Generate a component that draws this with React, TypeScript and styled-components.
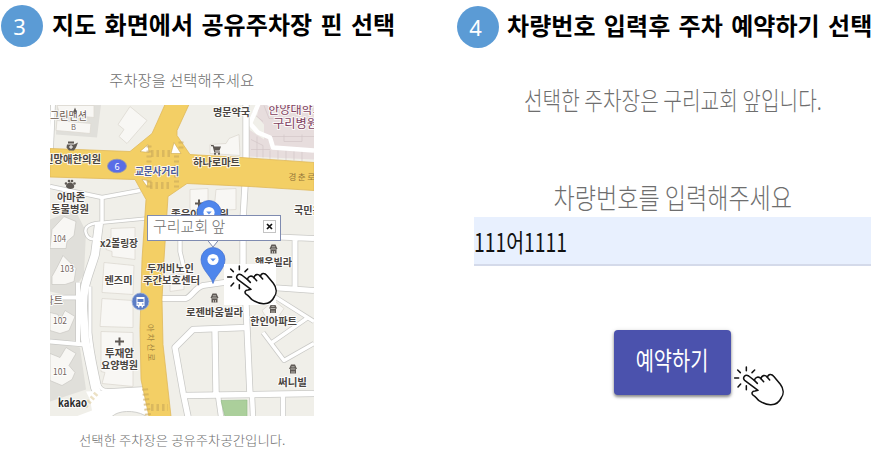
import React from 'react';
import styled, { createGlobalStyle } from 'styled-components';

const Global = createGlobalStyle`
  * { box-sizing: border-box; }
  body { margin: 0; background: #fff; overflow: hidden; }
`;

const Page = styled.main`
  display: grid;
  grid-template-columns: 457px 420px;
  width: 877px;
  height: 452px;
  background: #fff;
  font-family: "Noto Sans CJK KR", sans-serif;
`;

const Step = styled.section`
  display: flex;
  flex-direction: column;
  min-width: 0;
`;

const StepHeader = styled.header<{ $top: number; $left: number }>`
  display: flex;
  height: 50px;
  padding: ${p => p.$top}px 0 0 ${p => p.$left}px;
`;

const Badge = styled.span`
  flex: none;
  width: 42px;
  height: 42px;
  border-radius: 50%;
  background: #5b9bd5;
  color: #fff;
  font: 400 22px/43px "Noto Sans", sans-serif;
  text-align: center;
  padding-right: 5px;
`;

const Title = styled.h2<{ $gap: number }>`
  margin: 0 0 0 ${p => p.$gap}px;
  font-size: 24px;
  line-height: 38px;
  font-weight: 700;
  letter-spacing: 0.06px;
  word-spacing: 2.8px;
  white-space: nowrap;
  color: #000;
`;

const Body = styled.div<{ $left: number; $width: number }>`
  display: flex;
  flex-direction: column;
  align-items: center;
  margin-left: ${p => p.$left}px;
  width: ${p => p.$width}px;
`;

const Caption = styled.p<{ $size: number; $height: number; $squeeze?: number; $top?: number }>`
  margin: ${p => p.$top ?? 0}px 0 0;
  height: ${p => p.$height}px;
  font-size: ${p => p.$size}px;
  line-height: ${p => p.$height}px;
  font-weight: 300;
  white-space: nowrap;
  color: #6e6e6e;
  transform: scaleX(${p => p.$squeeze ?? 1});
`;

const MapFrame = styled.div`
  position: relative;
  width: 264px;
  height: 311px;
  overflow: hidden;
  margin-top: 14px;
`;

const MapDrawing = styled.svg`
  display: block;
  width: 264px;
  height: 311px;
`;

const Label = styled.text<{ $thin?: boolean }>`
  font-family: "Noto Sans CJK KR", sans-serif;
  font-weight: ${p => (p.$thin ? 400 : 700)};
  paint-order: stroke;
  stroke: rgba(255, 255, 255, 0.85);
  stroke-width: 2px;
  stroke-linejoin: round;
`;

const InfoWindow = styled.div`
  position: absolute;
  left: 97px;
  top: 110px;
  width: 134px;
  height: 26px;
  display: flex;
  align-items: center;
  justify-content: space-between;
  padding: 0 4px 4px 5px;
  border: 1px solid #7f8bb0;
  background: #fff;
  color: #6e6e6e;
  font-size: 15px;
  font-weight: 300;
  line-height: 20px;
  white-space: nowrap;
`;

const CloseButton = styled.button`
  width: 13px;
  height: 13px;
  padding: 0;
  border: 1px solid #c4c4c4;
  background: #fff;
  display: grid;
  place-items: center;
`;

const MapHand = styled.div`
  position: absolute;
  left: 174px;
  top: 159px;
  width: 52px;
  height: 41px;
  background: #fff;
`;

const Field = styled.div`
  width: 397px;
  height: 49px;
  background: #e8f0fe;
  border-bottom: 2px solid #d4daea;
  display: flex;
  align-items: center;
`;

const FieldValue = styled.span`
  font-size: 25.5px;
  line-height: 48px;
  font-weight: 400;
  color: #111;
  white-space: nowrap;
  transform: scaleX(0.76);
  transform-origin: left center;
`;

const ActionRow = styled.div`
  position: relative;
  margin-top: 64px;
`;

const ReserveButton = styled.button`
  display: block;
  width: 117px;
  height: 65px;
  padding: 0 0 8px;
  border: 0;
  border-radius: 4px;
  background: #4b52ad;
  color: #fff;
  font: 400 25px/56px "Noto Sans CJK KR", sans-serif;
  box-shadow: 0 2px 3px rgba(0, 0, 0, 0.4), 0 1px 5px rgba(0, 0, 0, 0.16);
`;

const ButtonText = styled.span`
  display: inline-block;
  transform: scaleX(0.79);
  margin: 0 -20px;
`;

const ButtonHand = styled.div`
  position: absolute;
  left: 117px;
  top: 35px;
  width: 53px;
  height: 41px;
`;

const HandDrawing = styled.svg`
  display: block;
  width: 53px;
  height: 41px;
`;

function Hand() {
  return (
    <HandDrawing viewBox="0 0 159 123" fill="none" stroke="#111" strokeWidth="4.6" strokeLinecap="round" strokeLinejoin="round">
      <path d="M46 6V17M11 39H23M20 15L28 23M71 15L63 23M29 57L21 66M46 62V74" />
      <path fill="#fff" d="M81 76L41 46C33 38 43 26 53 33L70 46C73 36 83 33 90 41C92 30 103 29 109 37C112 26 122 26 128 34L148 58C158 71 159 87 151 98C145 112 135 119 120 119C105 120 94 113 84 107C77 102 74 94 67 91C60 86 63 78 72 78Z" />
      <path d="M70 46L79 55M90 41L98 50M109 37L116 45" />
    </HandDrawing>
  );
}

type Place = { t: string; x: number; y: number; w: number; s?: number; c?: string; thin?: boolean };

const places: Place[] = [
  { t: '그린맨션', x: 50, y: 120.5, w: 37, s: 11, c: '#6a5a50', thin: true },
  { t: 'B', x: 71, y: 130, w: 5, s: 8, c: '#75675f', thin: true },
  { t: '신망애한의원', x: 44, y: 163.5, w: 57 },
  { t: '교문사거리', x: 135, y: 175, w: 44, s: 10, c: '#4a5a9c' },
  { t: '아마존', x: 57, y: 201, w: 28 },
  { t: '동물병원', x: 51, y: 213, w: 38 },
  { t: '명문약국', x: 213, y: 116, w: 37 },
  { t: '한양대학교', x: 268, y: 114, w: 56, s: 12, c: '#81415f', thin: true },
  { t: '구리병원', x: 273, y: 128, w: 45, s: 12, c: '#81415f', thin: true },
  { t: '하나로마트', x: 193, y: 166, w: 47 },
  { t: '좋은아이의원', x: 171, y: 218.5, w: 58 },
  { t: '국민은행', x: 294, y: 214, w: 37 },
  { t: 'x2볼링장', x: 100, y: 247, w: 38 },
  { t: '두꺼비노인', x: 147, y: 272, w: 47 },
  { t: '주간보호센터', x: 143, y: 284, w: 57 },
  { t: '렌즈미', x: 104.5, y: 284, w: 28 },
  { t: '행운빌라', x: 255, y: 266, w: 37 },
  { t: '로젠바움빌라', x: 186, y: 316, w: 57 },
  { t: '한인아파트', x: 250, y: 325.5, w: 47 },
  { t: '투재암', x: 105, y: 357.5, w: 29 },
  { t: '요양병원', x: 101, y: 369, w: 37 },
  { t: '써니빌', x: 278, y: 386, w: 29 },
  { t: '104', x: 53, y: 242, w: 13, s: 8.5, c: '#75675f', thin: true },
  { t: '103', x: 60, y: 272, w: 14, s: 8.5, c: '#75675f', thin: true },
  { t: '102', x: 53, y: 324, w: 14, s: 8.5, c: '#75675f', thin: true },
  { t: '101', x: 53, y: 375, w: 14, s: 8.5, c: '#75675f', thin: true },
  { t: '아파트', x: 35, y: 304, w: 28, c: '#75675f', thin: true },
];

const buildings = [
  'M57 106H94V118L60 115ZM57 121L91 124L90 134L56 131Z',
  'M130 107L147 121L127 144L119 137L124 130L118 125Z',
  'M210 145L226 144L229 139L239 135L240 156L210 154Z',
  'M111 229L135 228V260L112 257V252L106 250V240L111 238Z',
  'M104 263L134 266L133 295L102 293Z',
  'M102 299L133 301V328L100 327Z',
  'M101 332L133 333V387L102 384L105 373L101 372Z',
  'M190 190L208 189V210H190ZM216 190L236 189V210L214 211Z',
  'M262 311L274 301L284 309L277 319L265 316Z',
  'M170 275H184V290L170 292Z',
];

const flats = [
  'M52 230L64 217L76 222L74 236L67 242L66 249L50 249Z',
  'M57 268L63 256L70 263L76 269L74 282L65 285L52 285V277Z',
  'M50 313L58 315L60 321L65 311L75 317L69 331L60 334L50 331Z',
  'M50 354L60 358L66 348L76 354L69 366L75 373L72 380L62 386L50 381Z',
];

const roads: [string, number][] = [
  ['M53 105L51 150', 4],
  ['M50 187L102 198L140 191M102 197V224', 3.5],
  ['M146 219L104 223C91 223 83 227 86 234C88 240 92 240 96 239', 2.5],
  ['M99 224L95 255C89 275 83 285 83 307L85 340L95 388L107 416', 8],
  ['M90 287V333C92 355 96 370 99 385Q101 392 110 391L145 389', 3],
  ['M50 298H79M78 283V344M50 342L84 345', 4],
  ['M246 105V160M245 186L243 220V284L246 305L250 396', 5.5],
  ['M162 299H186C192 297 195 288 203 286L224 283H244M244 236L314 239M295 239V288M244 286L314 291', 5],
  ['M180 240V252L185 273', 3.5],
  ['M246 328L193 330L175 348L183 393L188 417', 5.5],
  ['M215 330L216 394M184 396L314 394', 5.5],
  ['M218 396L221 417M252 395L253 417M283 395V417', 4.5],
  ['M263 333L284 361L314 344M272 343L308 318M246 287L276 298L314 322', 3.5],
];

function Pin({ x, y }: { x: number; y: number }) {
  return (
    <g transform={`translate(${x} ${y})`}>
      <path d="M0 24C-2 16-12 10-12 0A12 12 0 0 1 12 0C12 10 2 16 0 24Z" fill="#4f86ec" stroke="#426fce" strokeWidth=".7" />
      <circle r="5.6" fill="#fff" />
      <path d="M-2.8-1H2.8L0 2Z" fill="#5c91ec" />
    </g>
  );
}

function TinyHouse({ x, y }: { x: number; y: number }) {
  return (
    <g transform={`translate(${x} ${y})`}>
      <path d="M-3 4.5V0H-4L-2-4.5H2L4 0H3V4.5Z" fill="#5e5954" />
      <path d="M-1 4.5V2M1 4.5V2M-2.4 0H2.4M-1.6-2.2H1.6" stroke="#e4e2dd" strokeWidth=".7" />
    </g>
  );
}

function StreetMap() {
  return (
    <MapDrawing viewBox="50 105.5 264 311" fill="none">
      <path fill="#f0efe9" d="M50 105H314V417H50Z" />
      <path fill="#e0dfda" d="M57 105H101L97 138L56 135ZM50 220L75 210L86 232L84 275L78 284L76 298L50 292ZM50 300H80V341H50ZM50 343L80 348L86 390L50 402Z" />
      <path fill="#e7dddd" d="M259 105H314V160L249 157V130L264 140V125L257 117Z" />
      <path stroke="#d2c5c7" strokeWidth=".7" d="M251 140L263 146V158M257 137V158M251 150H270M270 151V160M278 151V160M286 151V161M294 151V161M302 151V162M270 137H314M284 135V142H302V135M264 106L269 119H314M252 113L263 122" />
      <path stroke="#fff" strokeWidth="4.5" strokeLinejoin="round" d="M259 103L250 124L258 133L270 138L273 148L314 151" />
      {buildings.map(d => <path key={d} d={d} fill="#f8f7f4" stroke="#ddd9d2" strokeWidth=".8" />)}
      {flats.map(d => <path key={d} d={d} fill="#f8f7f4" stroke="#c5c3bd" strokeWidth=".6" />)}
      {roads.map(([d, w]) => <path key={`edge${d}`} d={d} stroke="#c9c9c6" strokeWidth={w + 1.5} strokeLinejoin="round" />)}
      {roads.map(([d, w]) => <path key={d} d={d} stroke="#fff" strokeWidth={w} strokeLinejoin="round" />)}
      <path fill="#fff" d="M86 392L147 389L151 417H76L92 411L90 400Z" />
      <path fill="#f0efe9" stroke="#d0d0cd" d="M112 417C118 411 134 410 145 416V417Z" />
      <path fill="#abcf9b" stroke="#91bc87" strokeWidth=".6" d="M221 401L247 400.5V417H225Z" />
      <path fill="#f3cf65" stroke="#dfb95a" strokeWidth=".8" d="M50 149L130 152L152 134L157 123L165 105H189L177 131V136L190 155L241 158L314 163V191L250 187L187 184L168 197L164 260L162 300L163 345L171 417H149L141 380L140 330L142 260L146 200L135 180L50 177.500Z" />
      <path fill="#fff" stroke="#cda94f" strokeWidth=".6" d="M140 152L148 145L149 153ZM174 143L181 154H171ZM142 180L147 187L148 181Z" />
      <g stroke="#c9a95a" strokeOpacity=".6">
        <path strokeWidth="7" strokeDasharray="2.5 3" d="M151 154H172M150 186H172M151 408H168" />
        <path strokeWidth="5" strokeDasharray="2 3" d="M149 146V190M176.500 156V190M181 142V152" />
        <path strokeWidth="6" strokeDasharray="2 3" d="M145 389L148 416" />
        <path strokeWidth="5" strokeDasharray="2.500 2.500" strokeOpacity=".35" d="M85 407L98 392" />
      </g>
      <ellipse cx="117" cy="166.5" rx="9.5" ry="6.8" fill="#596de7" stroke="#8d94b1" strokeWidth=".8" />
      <text x="117" y="170" fill="#fff" fontFamily="Noto Sans" fontSize="9" textAnchor="middle">6</text>
      <text x="288.500" y="180" fill="#96783a" fontFamily="Noto Sans CJK KR" fontSize="8.500" letterSpacing="1.500">경춘로</text>
      <text transform="translate(147 324.500) rotate(88)" fill="#a5863f" fontFamily="Noto Sans CJK KR" fontSize="8.500" letterSpacing="2">아차산로</text>
      {places.map(p => (
        <Label key={p.t} x={p.x} y={p.y} textLength={p.w} lengthAdjust="spacingAndGlyphs" fontSize={p.s ?? 10.5} fill={p.c ?? '#4a4541'} $thin={p.thin}>{p.t}</Label>
      ))}
      <Label x="58" y="407.500" fontSize="11" textLength="29" lengthAdjust="spacingAndGlyphs" fill="#2c2c2c">kakao</Label>
      <TinyHouse x={273.5} y={249.5} />
      <TinyHouse x={214.5} y={298.500} />
      <TinyHouse x={273} y={309} />
      <TinyHouse x={293} y={369.500} />
      <g fill="#5e5954">
        <path d="M118.500 338H120.500V341H124V343H120.500V346H118.500V343H115V341H118.500ZM198 200H200V203H203V205H200V208H198V205H195V203H198Z" />
        <path d="M67 145H74L78 143L76 148L74 151H69L66.500 148ZM68 144V142H74V144Z" />
        <path d="M66 187C66 184 69 183 70 183C72 183 75 185 74 188C73 190 67 190 66 187Z" />
        <circle cx="66" cy="184" r="1.3" /><circle cx="69" cy="181.5" r="1.3" /><circle cx="72" cy="181.5" r="1.3" /><circle cx="74.5" cy="184" r="1.3" />
        <path d="M211 145.500H213.500L214.300 147H221L219.500 151H215L215.300 152H220V153H214.300L212.700 146.700H211Z" />
        <circle cx="215" cy="154.300" r="1.1" /><circle cx="219" cy="154.300" r="1.100" />
        <path d="M73 113L75 108L77 113Z" />
      </g>
      <path d="M71 145.500V149.500M69 147.500H73" stroke="#fff" strokeWidth="1" />
      <circle cx="140.5" cy="302" r="8.5" fill="#5c7dc5" stroke="#a5b6dc" strokeWidth=".8" />
      <path fill="#fff" d="M136.5 297.500H144.5V306.500H143V308H141.5V306.500H139.5V308H138V306.500H136.5Z" />
      <path fill="#5c7dc5" d="M137.5 299.500H143.5V302.500H137.5ZM137.5 304H139V305H137.5ZM142 304H143.5V305H142Z" />
      <Pin x={209} y={213} />
      <path fill="#fff" stroke="#7f8bb0" d="M207 240L213 247.500L219 240Z" />
      <Pin x={213} y={260} />
    </MapDrawing>
  );
}

export default function App() {
  return (
    <>
      <Global />
      <Page>
        <Step>
          <StepHeader $top={5} $left={1}>
            <Badge>3</Badge>
            <Title $gap={9}>지도 화면에서 공유주차장 핀 선택</Title>
          </StepHeader>
          <Body $left={50} $width={264}>
            <Caption $size={15} $height={22} $top={19} $squeeze={1.025}>주차장을 선택해주세요</Caption>
            <MapFrame>
              <StreetMap />
              <InfoWindow>
                <span>구리교회 앞</span>
                <CloseButton aria-label="닫기">
                  <svg width="7" height="7" viewBox="0 0 7 7"><path d="M1 1L6 6M6 1L1 6" stroke="#111" strokeWidth="1.7" /></svg>
                </CloseButton>
              </InfoWindow>
              <MapHand><Hand /></MapHand>
            </MapFrame>
            <Caption $size={13} $height={20} $top={14} $squeeze={1.03}>선택한 주차장은 공유주차공간입니다.</Caption>
          </Body>
        </Step>
        <Step>
          <StepHeader $top={6} $left={0}>
            <Badge>4</Badge>
            <Title $gap={8}>차량번호 입력후 주차 예약하기 선택</Title>
          </StepHeader>
          <Body $left={17} $width={397}>
            <Caption $size={25} $height={36} $top={31} $squeeze={0.81}>선택한 주차장은 구리교회 앞입니다.</Caption>
            <Caption $size={28} $height={40} $top={60} $squeeze={0.824}>차량번호를 입력해주세요</Caption>
            <Field><FieldValue>111어1111</FieldValue></Field>
            <ActionRow>
              <ReserveButton><ButtonText>예약하기</ButtonText></ReserveButton>
              <ButtonHand><Hand /></ButtonHand>
            </ActionRow>
          </Body>
        </Step>
      </Page>
    </>
  );
}
